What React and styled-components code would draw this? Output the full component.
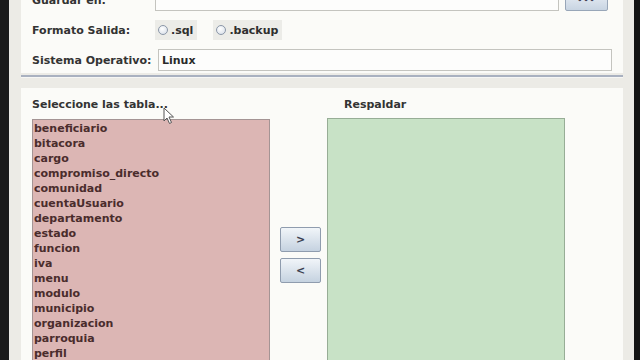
import React from 'react';
import styled, { createGlobalStyle } from 'styled-components';

const GlobalStyle = createGlobalStyle`
  html, body {
    margin: 0;
    padding: 0;
    background: #141414;
    overflow: hidden;
  }
  * { box-sizing: border-box; }
`;

const tablas = [
  'beneficiario', 'bitacora', 'cargo', 'compromiso_directo', 'comunidad',
  'cuentaUsuario', 'departamento', 'estado', 'funcion', 'iva', 'menu',
  'modulo', 'municipio', 'organizacion', 'parroquia', 'perfil', 'persona',
];

const Screen = styled.div`
  width: 640px;
  height: 360px;
  display: flex;
  overflow: hidden;
  background: #141414;
  font-family: "DejaVu Sans", "Liberation Sans", sans-serif;
  font-weight: bold;
  font-size: 11px;
  color: #333;
  position: relative;
`;

const Edge = styled.div`
  width: ${p => p.$w}px;
  flex: none;
  background: ${p => p.$c};
`;

const Frame = styled.div`
  flex: 1;
  background: #ecebe6;
  padding: 0 11px 0 12px;
  display: flex;
  flex-direction: column;
  margin-top: -12px;
`;

const TopPanel = styled.div`
  background: #fbfbf8;
  padding: 1px 11px 2px 11px;
  display: flex;
  flex-direction: column;
  gap: 8px;
`;

const Row = styled.div`
  display: flex;
  align-items: center;
  height: 22px;
`;

const Label = styled.div`
  width: ${p => p.$w}px;
  flex: none;
  white-space: nowrap;
`;

const Field = styled.div`
  height: 22px;
  flex: 1;
  background: #fdfdfc;
  border: 1px solid #c4c4bf;
  padding: 0 3px;
  display: flex;
  align-items: center;
  color: #2a2a2a;
`;

const DotsButton = styled.div`
  width: 43px;
  height: 22px;
  margin: 0 4px 0 6px;
  border: 1px solid #98a6b8;
  border-radius: 2px;
  background: linear-gradient(#eef3f8, #c8d4e2);
  display: flex;
  align-items: center;
  justify-content: center;
  font-size: 8px;
  color: #445;
  letter-spacing: 1px;
`;

const RadioGroup = styled.div`
  display: flex;
  gap: 16px;
`;

const Radio = styled.div`
  height: 20px;
  padding: 0 4px 0 3px;
  background: #ecece8;
  display: flex;
  align-items: center;
  gap: 3px;
  color: #2e2e2e;
  font-size: 11px;
`;

const RadioDot = styled.span`
  width: 10px;
  height: 10px;
  border-radius: 50%;
  border: 1px solid #8b97a8;
  background: radial-gradient(circle at 40% 35%, #ffffff, #d3dbe6);
`;

const Separator = styled.div`
  height: 3px;
  margin-top: 2px;
  border-top: 2px solid #a9b1c0;
  border-bottom: 1px solid #f6f6f4;
`;

const BottomPanel = styled.div`
  flex: 1;
  margin-top: 10px;
  background: #fbfbf8;
  padding: 9px 11px 0 11px;
  display: grid;
  grid-template-columns: 238px 41px 238px;
  column-gap: 8px;
  grid-template-rows: 22px 1fr;
  position: relative;
`;

const ListTitle = styled.div`
  padding-left: ${p => p.$indent || 0}px;
  grid-column: ${p => p.$col};
  white-space: nowrap;
  overflow: hidden;
  text-overflow: ellipsis;
  line-height: 16px;
`;

const List = styled.div`
  grid-column: ${p => p.$col};
  background: ${p => p.$bg};
  border: 1px solid ${p => p.$border};
  border-bottom: none;
  margin-top: ${p => p.$top || 0}px;
  padding: 1px 1px 0;
  overflow: hidden;
`;

const Item = styled.div`
  height: 15px;
  line-height: 15px;
  color: #4a2c2c;
  font-size: 11px;
`;

const Arrows = styled.div`
  grid-column: 2;
  grid-row: 2;
  margin-left: 2px;
  padding-top: 108px;
  display: flex;
  flex-direction: column;
  gap: 6px;
`;

const ArrowButton = styled.div`
  width: 41px;
  height: 25px;
  border: 1px solid #8f9cae;
  border-radius: 2px;
  background: linear-gradient(#f1f5f9, #c5d2e0);
  display: flex;
  align-items: center;
  justify-content: center;
  color: #3a4050;
  font-size: 11px;
`;

const Cursor = styled.svg`
  position: absolute;
  left: 163px;
  top: 107px;
  width: 12px;
  height: 18px;
`;

export default function App() {
  return (
    <Screen>
      <GlobalStyle />
      <Edge $w={9} $c="#1b1b1b" />
      <Frame>
        <TopPanel>
          <Row>
            <Label $w={123}>Guardar en:</Label>
            <Field />
            <DotsButton>•••</DotsButton>
          </Row>
          <Row>
            <Label $w={123}>Formato Salida:</Label>
            <RadioGroup>
              <Radio><RadioDot />.sql</Radio>
              <Radio><RadioDot />.backup</Radio>
            </RadioGroup>
          </Row>
          <Row>
            <Label $w={126}>Sistema Operativo:</Label>
            <Field>Linux</Field>
          </Row>
        </TopPanel>
        <Separator />
        <BottomPanel>
          <ListTitle $col={1}>Seleccione las tabla...</ListTitle>
          <ListTitle $col="3" $indent={17}>Respaldar</ListTitle>
          <List $col={1} $bg="#dcb6b4" $border="#a49494">
            {tablas.map(t => <Item key={t}>{t}</Item>)}
          </List>
          <Arrows>
            <ArrowButton>&gt;</ArrowButton>
            <ArrowButton>&lt;</ArrowButton>
          </Arrows>
          <List $col={3} $bg="#c8e2c6" $border="#97ad96" $top={-1} />
        </BottomPanel>
      </Frame>
      <Edge $w={6} $c="#141414" />
      <Cursor viewBox="0 0 12 18">
        <path d="M1 1 L1 14 L4 11 L6.5 16.5 L8.5 15.5 L6 10 L10.5 10 Z" fill="#ffffff" stroke="#555" strokeWidth="1" strokeLinejoin="round" />
      </Cursor>
    </Screen>
  );
}
